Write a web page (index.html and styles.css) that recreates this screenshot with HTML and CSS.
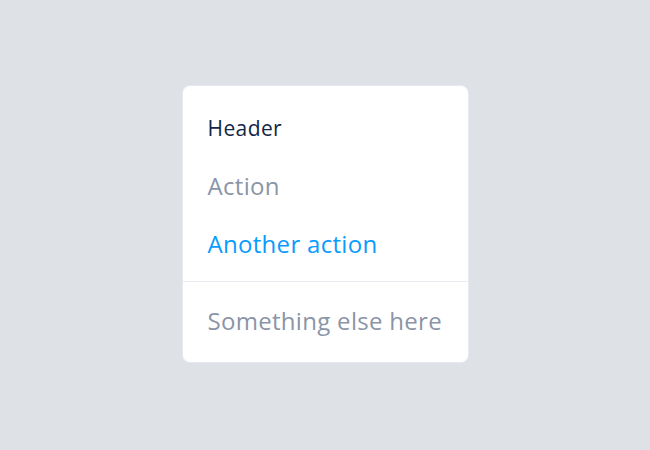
FILE: index.html
```
<!DOCTYPE html>
<html>
<head>
<meta charset="utf-8">
<link rel="stylesheet" href="styles.css">
</head>
<body>
<div class="stage">
  <div class="menu">
    <div class="item header">Header</div>
    <div class="item action">Action</div>
    <div class="item active">Another action</div>
    <div class="divider"></div>
    <div class="item action last">Something else here</div>
  </div>
</div>
</body>
</html>
```
FILE: styles.css
```
html, body {
  margin: 0;
  padding: 0;
  width: 650px;
  height: 450px;
  background: #dee1e6;
  font-family: "Open Sans", "Lato", sans-serif;
}
.stage {
  box-sizing: border-box;
  width: 650px;
  height: 450px;
  padding-top: 85px;
  display: flex;
  align-items: flex-start;
  justify-content: center;
}
.menu {
  box-sizing: border-box;
  width: 287px;
  height: 278px;
  background: #ffffff;
  border: 1px solid #e6e9ee;
  border-radius: 8px;
  padding: 13px 0 12px 0;
}
.item {
  height: 58px;
  line-height: 58px;
  padding-left: 25px;
  white-space: nowrap;
}
.header {
  font-size: 21px;
  letter-spacing: 0.4px;
  color: #132647;
}
.action {
  font-size: 24px;
  letter-spacing: 0.3px;
  color: #8a95a7;
}
.active {
  font-size: 24px;
  letter-spacing: 0.3px;
  color: #0a9bff;
}
.divider {
  height: 1px;
  background: #e8ebef;
  margin-top: 8px;
}
.last {
  margin-top: 10px;
}
```
